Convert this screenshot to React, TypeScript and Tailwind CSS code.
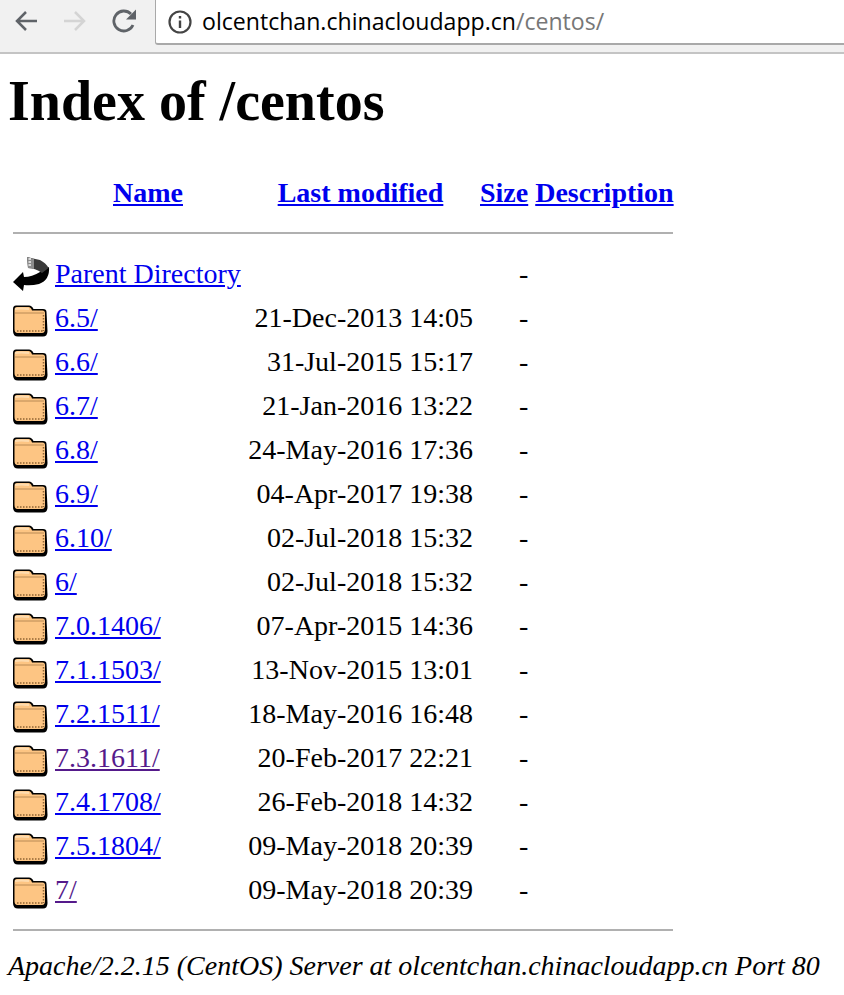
const rows = [
  { name: '6.5/', date: '21-Dec-2013 14:05' },
  { name: '6.6/', date: '31-Jul-2015 15:17' },
  { name: '6.7/', date: '21-Jan-2016 13:22' },
  { name: '6.8/', date: '24-May-2016 17:36' },
  { name: '6.9/', date: '04-Apr-2017 19:38' },
  { name: '6.10/', date: '02-Jul-2018 15:32' },
  { name: '6/', date: '02-Jul-2018 15:32' },
  { name: '7.0.1406/', date: '07-Apr-2015 14:36' },
  { name: '7.1.1503/', date: '13-Nov-2015 13:01' },
  { name: '7.2.1511/', date: '18-May-2016 16:48' },
  { name: '7.3.1611/', date: '20-Feb-2017 22:21', visited: true },
  { name: '7.4.1708/', date: '26-Feb-2018 14:32' },
  { name: '7.5.1804/', date: '09-May-2018 20:39' },
  { name: '7/', date: '09-May-2018 20:39', visited: true },
];

const FolderIcon = () => (
  <svg width="35" height="35" viewBox="0 0 35 35" className="block overflow-visible">
    <path d="M0 9 Q0 5.500 3 5.500 L16 5.500 Q19 5.500 20.500 9 L30 9 Q33.500 9 33.500 12 L34.500 31 Q34.500 36.500 30 36.500 L5 36.500 Q0 36.500 0 31 Z" fill="#000" />
    <path d="M1.500 10 Q1.500 7 4 7 L15.500 7 Q18 7 19 10.500 L29.500 10.500 Q32 10.500 32 13 L32 29 Q32 33 29 33 L4.500 33 Q1.500 33 1.500 29 Z" fill="#fdc583" />
    <path d="M2 13 H31" stroke="#b98a55" strokeWidth="1" />
    <path d="M2 9 Q8 8 16 9" stroke="#fedcb0" strokeWidth="2" fill="none" />
    <path d="M4 31 H30 M30.500 15 V31" stroke="#8f6434" strokeWidth="1.500" strokeDasharray="1.500 1.500" />
  </svg>
);

const BackIcon = () => (
  <svg width="35" height="35" viewBox="0 0 35 35" className="block overflow-visible">
    <path d="M0 26 L10 16 L11 21 Q19 21 27 16 L36 11 Q37 24 26 28 Q18 30 11 29 L10 35 Z" fill="#000" />
    <path d="M14 1 Q22 3 27 4 Q33 7 35.500 12 L29 17 Q22 12 15 12 Z" fill="#3a3a3a" />
    <path d="M14 1 L21 3 L21 13 L15 12 Z" fill="#8c8c8c" />
    <path d="M15.500 3 H18 M15.500 6 H18 M15.500 9 H18" stroke="#f2f2f2" strokeWidth="1.500" />
  </svg>
);

const ToolbarIcons = () => (
  <div className="flex items-center h-[42px] w-[155px] pl-[14px] gap-[25px]">
    <svg width="24" height="24" viewBox="0 0 24 24" fill="none" stroke="#5f6368" strokeWidth="2.500">
      <path d="M23 12 H3 M12 3 L3 12 L12 21" />
    </svg>
    <svg width="24" height="24" viewBox="0 0 24 24" fill="none" stroke="#d4d4d4" strokeWidth="2.500">
      <path d="M1 12 H21 M12 3 L21 12 L12 21" />
    </svg>
    <svg width="26" height="26" viewBox="0 0 26 26" fill="none">
      <path d="M21 17 A10 10 0 1 1 19 6" stroke="#5f6368" strokeWidth="2.800" />
      <path d="M24 1.500 V11.500 H14 Z" fill="#5f6368" />
    </svg>
  </div>
);

const InfoIcon = () => (
  <svg width="24" height="24" viewBox="0 0 24 24" fill="none">
    <circle cx="12" cy="12" r="10.500" stroke="#444" strokeWidth="2.200" />
    <path d="M12 10.500 V18 M12 6 V8.500" stroke="#444" strokeWidth="2.400" />
  </svg>
);

export default function App() {
  return (
    <div className="w-[844px] h-[995px] overflow-hidden bg-white font-['Liberation_Serif',serif] text-[28px] text-black">
      <div className="flex h-[54px] bg-[#f1f1f1] border-b-2 border-[#c4c4c4]">
        <ToolbarIcons />
        <div className="flex-1 h-[45px] bg-white border-l border-b-2 border-[#a9a9a9] rounded-bl-[3px] flex items-center pl-[12px] gap-[10px] font-['Open_Sans',sans-serif] text-[23.1px]">
          <InfoIcon />
          <span>
            olcentchan.chinacloudapp.cn<span className="text-[#777]">/centos/</span>
          </span>
        </div>
      </div>

      <div className="px-[8px]">
        <h1 className="text-[56px] font-bold leading-[64px] mt-[15px] mb-[36px]">Index of /centos</h1>

        <table className="border-separate border-spacing-[7px] -ml-[2px] leading-[32px]">
          <thead>
            <tr className="h-[34px]">
              <th className="w-[35px] p-0"></th>
              <th className="w-[186px] p-0 font-bold"><a href="#" className="text-[#0000ee] underline">Name</a></th>
              <th className="w-[225px] p-0 font-bold"><a href="#" className="text-[#0000ee] underline">Last modified</a></th>
              <th className="w-[48px] p-0 font-bold"><a href="#" className="text-[#0000ee] underline">Size</a></th>
              <th className="w-[138px] p-0 font-bold"><a href="#" className="text-[#0000ee] underline">Description</a></th>
            </tr>
            <tr>
              <th colSpan={5} className="p-0 h-[31px] align-middle"><hr className="w-[660px] border-t-2 border-[#b0b0b0]" /></th>
            </tr>
          </thead>
          <tbody>
            <tr className="h-[37px]">
              <td className="p-0"><BackIcon /></td>
              <td className="p-0"><a href="#" className="text-[#0000ee] underline">Parent Directory</a></td>
              <td className="p-0"></td>
              <td className="p-0 text-right">-</td>
              <td className="p-0"></td>
            </tr>
            {rows.map((row) => (
              <tr key={row.name} className="h-[37px]">
                <td className="p-0"><FolderIcon /></td>
                <td className="p-0">
                  <a href="#" className={`underline ${row.visited ? 'text-[#551a8b]' : 'text-[#0000ee]'}`}>{row.name}</a>
                </td>
                <td className="p-0 text-right">{row.date}</td>
                <td className="p-0 text-right">-</td>
                <td className="p-0"></td>
              </tr>
            ))}
            <tr>
              <th colSpan={5} className="p-0 h-[29px] align-middle"><hr className="w-[660px] border-t-2 border-[#b0b0b0]" /></th>
            </tr>
          </tbody>
        </table>

        <address className="italic leading-[32px] -mt-[1px] whitespace-nowrap">
          Apache/2.2.15 (CentOS) Server at olcentchan.chinacloudapp.cn Port 80
        </address>
      </div>
    </div>
  );
}
